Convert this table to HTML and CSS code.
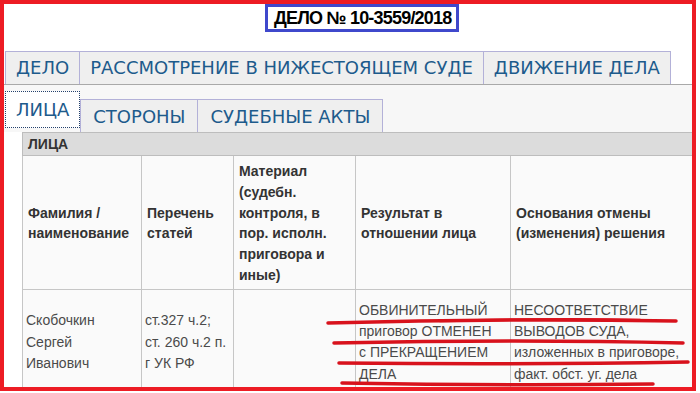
FILE: index.html
```html
<!DOCTYPE html>
<html lang="ru">
<head>
<meta charset="utf-8">
<title>ДЕЛО № 10-3559/2018</title>
<link rel="stylesheet" href="styles.css">
</head>
<body>
<div class="frame">
  <div class="title-wrap">
    <h1 class="case-title">ДЕЛО № 10-3559/2018</h1>
  </div>
  <div class="tabs tabs-top">
    <a class="tab">ДЕЛО</a>
    <a class="tab">РАССМОТРЕНИЕ В НИЖЕСТОЯЩЕМ СУДЕ</a>
    <a class="tab">ДВИЖЕНИЕ ДЕЛА</a>
  </div>
  <div class="tabs tabs-bottom">
    <a class="tab active">ЛИЦА</a>
    <a class="tab">СТОРОНЫ</a>
    <a class="tab">СУДЕБНЫЕ АКТЫ</a>
  </div>
  <div class="content">
    <table class="persons">
      <colgroup>
        <col class="c1"><col class="c2"><col class="c3"><col class="c4"><col class="c5">
      </colgroup>
      <thead>
        <tr class="caption-row"><th colspan="5">ЛИЦА</th></tr>
        <tr class="head-row">
          <th>Фамилия / наименование</th>
          <th>Перечень статей</th>
          <th>Материал (судебн. контроля, в пор. исполн. приговора и иные)</th>
          <th>Результат в отношении лица</th>
          <th>Основания отмены (изменения) решения</th>
        </tr>
      </thead>
      <tbody>
        <tr>
          <td>Скобочкин<br>Сергей<br>Иванович</td>
          <td>ст.327 ч.2;<br>ст. 260 ч.2 п.<br>г УК РФ</td>
          <td></td>
          <td>ОБВИНИТЕЛЬНЫЙ<br>приговор ОТМЕНЕН<br>с ПРЕКРАЩЕНИЕМ<br>ДЕЛА</td>
          <td>НЕСООТВЕТСТВИЕ<br>ВЫВОДОВ СУДА,<br>изложенных в приговоре,<br>факт. обст. уг. дела</td>
        </tr>
      </tbody>
    </table>
  </div>
</div>
<svg class="marks" width="700" height="393" viewBox="0 0 700 393" aria-hidden="true">
  <g fill="none" stroke="#d8121c" stroke-width="3.5" stroke-linecap="round">
    <path d="M328 323 Q 500 318 676 321"/>
    <path d="M440 321 Q 560 318 640 320" stroke-width="2.5"/>
    <path d="M334 343 Q 520 339 683 343"/>
    <path d="M339 363 Q 520 365 688 362"/>
    <path d="M342 383 Q 500 386 653 384"/>
  </g>
</svg>
</body>
</html>
```

FILE: styles.css
```css
html, body {
  margin: 0;
  padding: 0;
}

body {
  width: 700px;
  height: 393px;
  overflow: hidden;
  position: relative;
  background: #ffffff;
  font-family: "Liberation Sans", Arial, sans-serif;
}

.frame {
  width: 688px;
  height: 383px;
  border: 4px solid #ed1c24;
  overflow: hidden;
  display: flex;
  flex-direction: column;
  background: #ffffff;
}

.title-wrap {
  display: flex;
  align-items: flex-start;
  height: 47px;
  padding-left: 261px;
  flex: none;
}

.case-title {
  margin: 0;
  border: 3px solid #3f48cc;
  padding: 0 5px 0 6px;
  font-family: "Liberation Sans", Arial, sans-serif;
  font-weight: bold;
  font-size: 18px;
  line-height: 22px;
  letter-spacing: -0.8px;
  color: #000000;
  background: #ffffff;
}

.tabs {
  display: flex;
  flex: none;
  padding-left: 1px;
}

.tab {
  display: block;
  font-family: "DejaVu Sans", Verdana, sans-serif;
  font-size: 18px;
  color: #1d5b8c;
  padding: 0 10px;
  border: 1px solid #b3b1d8;
  border-bottom: none;
  background: #efefef;
  white-space: nowrap;
}

.tab + .tab {
  margin-left: -1px;
}

.tabs-top {
  height: 33px;
}

.tabs-top .tab {
  line-height: 32px;
}

.tabs-bottom {
  height: 48px;
  box-sizing: border-box;
  border-top: 1px solid #a9a9a9;
  background: #f7f7f7;
  align-items: flex-end;
}

.tabs-bottom .tab {
  height: 32px;
  line-height: 34px;
  padding: 0 12px;
}

.tabs-bottom .tab.active {
  height: 35px;
  line-height: 35px;
  margin-bottom: 4px;
  padding: 0 10px;
  border: 1px dotted #23406c;
  background: #ffffff;
  color: #1d5b8c;
}

.tabs-bottom .tab.active + .tab {
  margin-left: 0;
}

.content {
  padding-left: 18px;
  flex: none;
}

.persons {
  width: 670px;
  table-layout: fixed;
  border-collapse: collapse;
  font-family: "Liberation Sans", Arial, sans-serif;
}

.c1 { width: 119px; }
.c2 { width: 92px; }
.c3 { width: 122px; }
.c4 { width: 155px; }
.c5 { width: 182px; }

.persons th,
.persons td {
  border: 1px solid #c6c6c6;
  text-align: left;
  vertical-align: middle;
  background: #fafafa;
}

.persons th {
  font-weight: bold;
  font-size: 14px;
  line-height: 20.8px;
  color: #333333;
  padding: 5px 5px 3px;
}

.caption-row th {
  background: #dcdcdc;
  height: 22px;
  padding: 0 5px;
  line-height: 22px;
  border-color: #bdbdbd;
}

.persons td {
  font-size: 14px;
  line-height: 21.3px;
  color: #4a4a4a;
  padding: 10px 3px;
}

.marks {
  position: absolute;
  top: 0;
  left: 0;
  pointer-events: none;
}
```
